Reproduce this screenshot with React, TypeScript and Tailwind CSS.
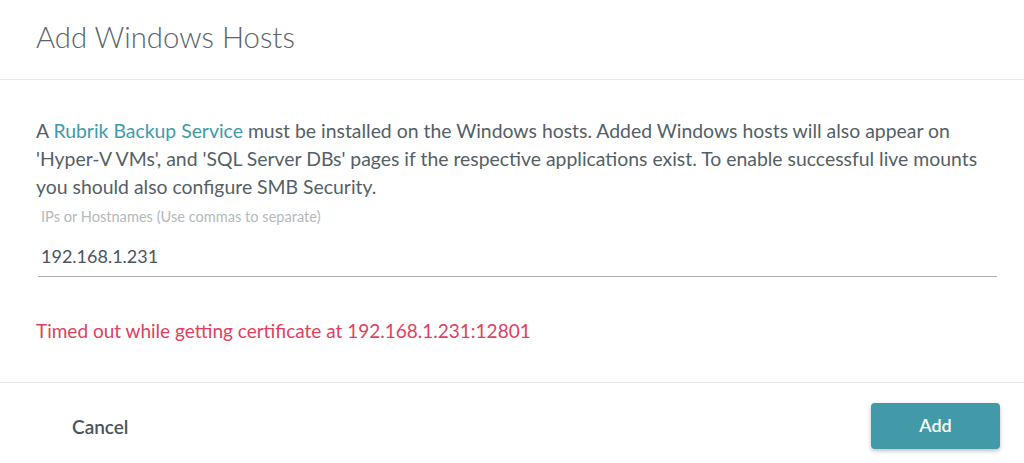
import React from "react";

export default function App() {
  return (
    <div className="w-[1024px] h-[463px] bg-white flex flex-col text-[#4a555c]" style={{ fontFamily: "Lato, 'Noto Sans', sans-serif" }}>
      <div className="h-[80px] shrink-0 border-b border-[#e8e9ea] flex items-center px-[36px]">
        <h1 className="text-[29.3px] font-light text-[#5a646b] -mt-[6px]">Add Windows Hosts</h1>
      </div>
      <div className="flex-1 px-[36px] pt-[37px]">
        <p className="text-[19.4px] leading-[28px] text-[#545f66]">
          A <span className="text-[#3d9bac]">Rubrik Backup Service</span> must be installed on the Windows hosts. Added Windows hosts will also appear on 'Hyper-V VMs', and 'SQL Server DBs' pages if the respective applications exist. To enable successful live mounts you should also configure SMB Security.
        </p>
        <div className="mt-[7px] pl-[5px] text-[14.6px] leading-[18px] text-[#b3b9bd]">IPs or Hostnames (Use commas to separate)</div>
        <div className="ml-[2px] -mr-[9px] mt-[17px] pl-[3px] pb-[7px] border-b border-[#a9aeb2] text-[18px] leading-[26px] text-[#4a555c]">192.168.1.231</div>
        <div className="mt-[41px] text-[19px] leading-[26px] text-[#e0405e]">Timed out while getting certificate at 192.168.1.231:12801</div>
      </div>
      <div className="h-[81px] shrink-0 border-t border-[#e8e9ea] flex items-center justify-between pl-[72px] pr-[24px] pt-[5px]">
        <button className="text-[19px] font-semibold text-[#4a555c] mt-[3px]">Cancel</button>
        <button className="w-[129px] h-[46px] rounded-[4px] bg-[#429aa8] text-white text-[18px] font-semibold shadow-[0_2px_4px_rgba(0,0,0,0.25)]">Add</button>
      </div>
    </div>
  );
}
